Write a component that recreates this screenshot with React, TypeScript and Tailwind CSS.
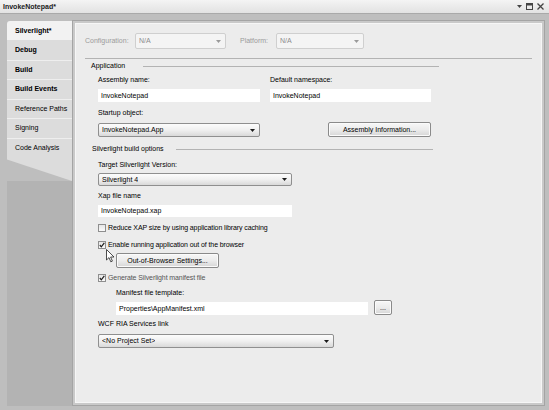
import React from "react";

const font = { fontFamily: "'Liberation Sans', Arial, sans-serif" };

function Arrow({ color = "#222" }: { color?: string }) {
  return (
    <svg width="5" height="3" viewBox="0 0 5 3" className="shrink-0">
      <path d="M0 0 L5 0 L2.5 3 Z" fill={color} />
    </svg>
  );
}

function Dropdown({ cls, text, disabled }: { cls: string; text: string; disabled?: boolean }) {
  return (
    <div
      className={
        "flex items-center justify-between rounded-[2px] border pl-[3px] pr-[4px] " +
        (disabled
          ? "border-[#cfcfcf] bg-[#f4f4f4] text-[#8c8c8c] "
          : "border-[#8f8f8f] bg-gradient-to-b from-[#fcfcfc] via-[#f0f0f0] to-[#d9d9d9] text-black ") +
        cls
      }
    >
      <span className="truncate">{text}</span>
      <Arrow color={disabled ? "#9a9a9a" : "#1a1a1a"} />
    </div>
  );
}

function Input({ cls, text }: { cls: string; text: string }) {
  return (
    <div className={"flex items-center bg-white pl-[3px] text-black " + cls}>{text}</div>
  );
}

function Button({ cls, text }: { cls: string; text: string }) {
  return (
    <div
      className={
        "flex items-center justify-center rounded-[2px] border border-[#8a8a8a] bg-gradient-to-b from-[#f7f7f7] via-[#ececec] to-[#d6d6d6] text-black shadow-[inset_0_0_0_1px_#fbfbfb] " +
        cls
      }
    >
      {text}
    </div>
  );
}

function Check({ checked, label, gray }: { checked?: boolean; label: string; gray?: boolean }) {
  return (
    <div className="flex h-[10px] items-center">
      <div className="flex h-[8px] w-[8px] items-center justify-center border border-[#8e8e8e] bg-gradient-to-b from-[#e6e6e6] to-[#fafafa]">
        {checked && (
          <svg width="6" height="6" viewBox="0 0 6 6">
            <path d="M0.8 3 L2.3 4.8 L5.3 0.8" stroke="#1e1e1e" strokeWidth="1.2" fill="none" />
          </svg>
        )}
      </div>
      <span className={"ml-[2px] tracking-[-0.1px] " + (gray ? "text-[#555]" : "text-black")}>{label}</span>
    </div>
  );
}

function Header({ text, lineCls }: { text: string; lineCls: string }) {
  return (
    <div className="flex h-[10px] w-[348px] items-center leading-[10px] text-black">
      <span>{text}</span>
      <div className={"h-px bg-[#b3b3b3] " + lineCls} />
    </div>
  );
}

const tabs = ["Debug", "Build", "Build Events", "Reference Paths", "Signing", "Code Analysis"];

export default function App() {
  return (
    <div
      className="flex h-[410px] w-[549px] flex-col overflow-hidden bg-[#bebebe] text-[7px] leading-[10px]"
      style={font}
    >
      {/* title bar */}
      <div className="flex h-[14px] shrink-0 items-center justify-between border-b border-[#a9a9a9] bg-gradient-to-b from-[#f4f4f4] to-[#e2e2e2] pl-[3px] pr-[5px]">
        <span className="text-[7px] font-bold text-[#1a1a1a]">InvokeNotepad*</span>
        <div className="flex items-center gap-[4px] text-[#333]">
          <Arrow color="#444" />
          <svg width="7" height="7" viewBox="0 0 7 7">
            <rect x="0.5" y="0.5" width="6" height="6" fill="none" stroke="#444" />
            <rect x="0.5" y="0.5" width="6" height="2" fill="#444" />
          </svg>
          <svg width="7" height="7" viewBox="0 0 7 7">
            <path d="M0.5 0.5 L6.5 6.5 M6.5 0.5 L0.5 6.5" stroke="#444" strokeWidth="1.3" />
          </svg>
        </div>
      </div>

      {/* body */}
      <div className="flex flex-1 pl-[7px] pr-[4px] pt-[6px] pb-[4px]">
        {/* tabs column */}
        <div className="mt-[1px] flex w-[65px] shrink-0 flex-col">
          <div className="flex h-[19px] items-center rounded-tl-[3px] bg-[#f2f2f2] pl-[8px] font-bold text-black">
            Silverlight*
          </div>
          <div className="flex flex-col bg-[#dcdcdc]">
            {tabs.map((t, i) => (
              <div
                key={t}
                className={
                  "flex h-[19.5px] items-center pl-[8px] text-black " +
                  (i < 3 ? "font-bold " : "") +
                  (i > 0 ? "border-t border-[#eeeeee]" : "")
                }
              >
                {t}
              </div>
            ))}
          </div>
          <div className="h-[24px] bg-[#dcdcdc] [clip-path:polygon(0_0,100%_0,100%_100%,0_10%)]" />
          <div className="flex-1 bg-[#b3b3b3]" />
        </div>

        {/* content frame */}
        <div className="flex flex-1 border border-[#a4a4a4] bg-[#c9c9c9] p-[2px]">
          <div className="flex flex-1 border border-[#f6f6f6] bg-[#ececec]">
            <div className="flex flex-1 flex-col pl-[9px] pt-[9px]">
              {/* config row */}
              <div className="flex h-[16px] items-center">
                <span className="w-[50px] text-[#9b9b9b]">Configuration:</span>
                <Dropdown disabled cls="h-[16px] w-[91px]" text="N/A" />
                <span className="ml-[14px] w-[36px] text-[#9b9b9b]">Platform:</span>
                <Dropdown disabled cls="h-[16px] w-[88px]" text="N/A" />
              </div>
              <div className="mt-[9px] h-px w-[447px] bg-[#b3b3b3]" />

              <div className="ml-[6px] mt-[2px]">
                <Header text="Application" lineCls="ml-[18px] flex-1" />
              </div>

              <div className="ml-[13px] flex flex-col">
                <div className="mt-[4px] flex h-[10px]">
                  <span className="w-[172px]">Assembly name:</span>
                  <span>Default namespace:</span>
                </div>
                <div className="mt-[4px] flex">
                  <Input cls="h-[13px] w-[162px]" text="InvokeNotepad" />
                  <Input cls="ml-[10px] h-[13px] w-[161px]" text="InvokeNotepad" />
                </div>
                <div className="mt-[6px] h-[10px]">Startup object:</div>
                <div className="mt-[4px] flex items-start">
                  <Dropdown cls="mt-[1px] h-[14px] w-[162px]" text="InvokeNotepad.App" />
                  <Button cls="ml-[68px] h-[15px] w-[103px]" text="Assembly Information..." />
                </div>
              </div>

              <div className="ml-[7px] mt-[7px]">
                <Header text="Silverlight build options" lineCls="ml-[12px] w-[257px]" />
              </div>

              <div className="ml-[13px] flex flex-col">
                <div className="mt-[6px] h-[10px]">Target Silverlight Version:</div>
                <Dropdown cls="mt-[3px] h-[13px] w-[194px]" text="Silverlight 4" />
                <div className="mt-[5px] h-[10px]">Xap file name</div>
                <Input cls="mt-[4px] h-[12px] w-[194px]" text="InvokeNotepad.xap" />
                <div className="mt-[6px]">
                  <Check label="Reduce XAP size by using application library caching" />
                </div>
                <div className="mt-[7px]">
                  <Check checked label="Enable running application out of the browser" />
                </div>
                <div className="relative mt-[3px] flex">
                  <svg
                    width="9"
                    height="14"
                    viewBox="0 0 9 14"
                    className="absolute left-[8px] top-[-4px]"
                  >
                    <path d="M0.5 0.5 L0.5 11 L3 8.6 L4.8 12.8 L6.4 12.1 L4.6 8 L8 8 Z" fill="#fff" stroke="#222" strokeWidth="0.8" />
                  </svg>
                  <Button cls="ml-[18px] h-[15px] w-[103px]" text="Out-of-Browser Settings..." />
                </div>
                <div className="mt-[5px]">
                  <Check checked gray label="Generate Silverlight manifest file" />
                </div>
                <div className="ml-[18px] mt-[5px] h-[10px]">Manifest file template:</div>
                <div className="ml-[18px] mt-[2px] flex items-start">
                  <Input cls="mt-[2px] h-[13px] w-[252px]" text="Properties\AppManifest.xml" />
                  <Button cls="ml-[6px] h-[15px] w-[18px] leading-[8px]" text="..." />
                </div>
                <div className="mt-[4px] h-[10px]">WCF RIA Services link</div>
                <Dropdown cls="mt-[5px] h-[14px] w-[236px]" text="<No Project Set>" />
              </div>
            </div>
          </div>
        </div>
      </div>
    </div>
  );
}
